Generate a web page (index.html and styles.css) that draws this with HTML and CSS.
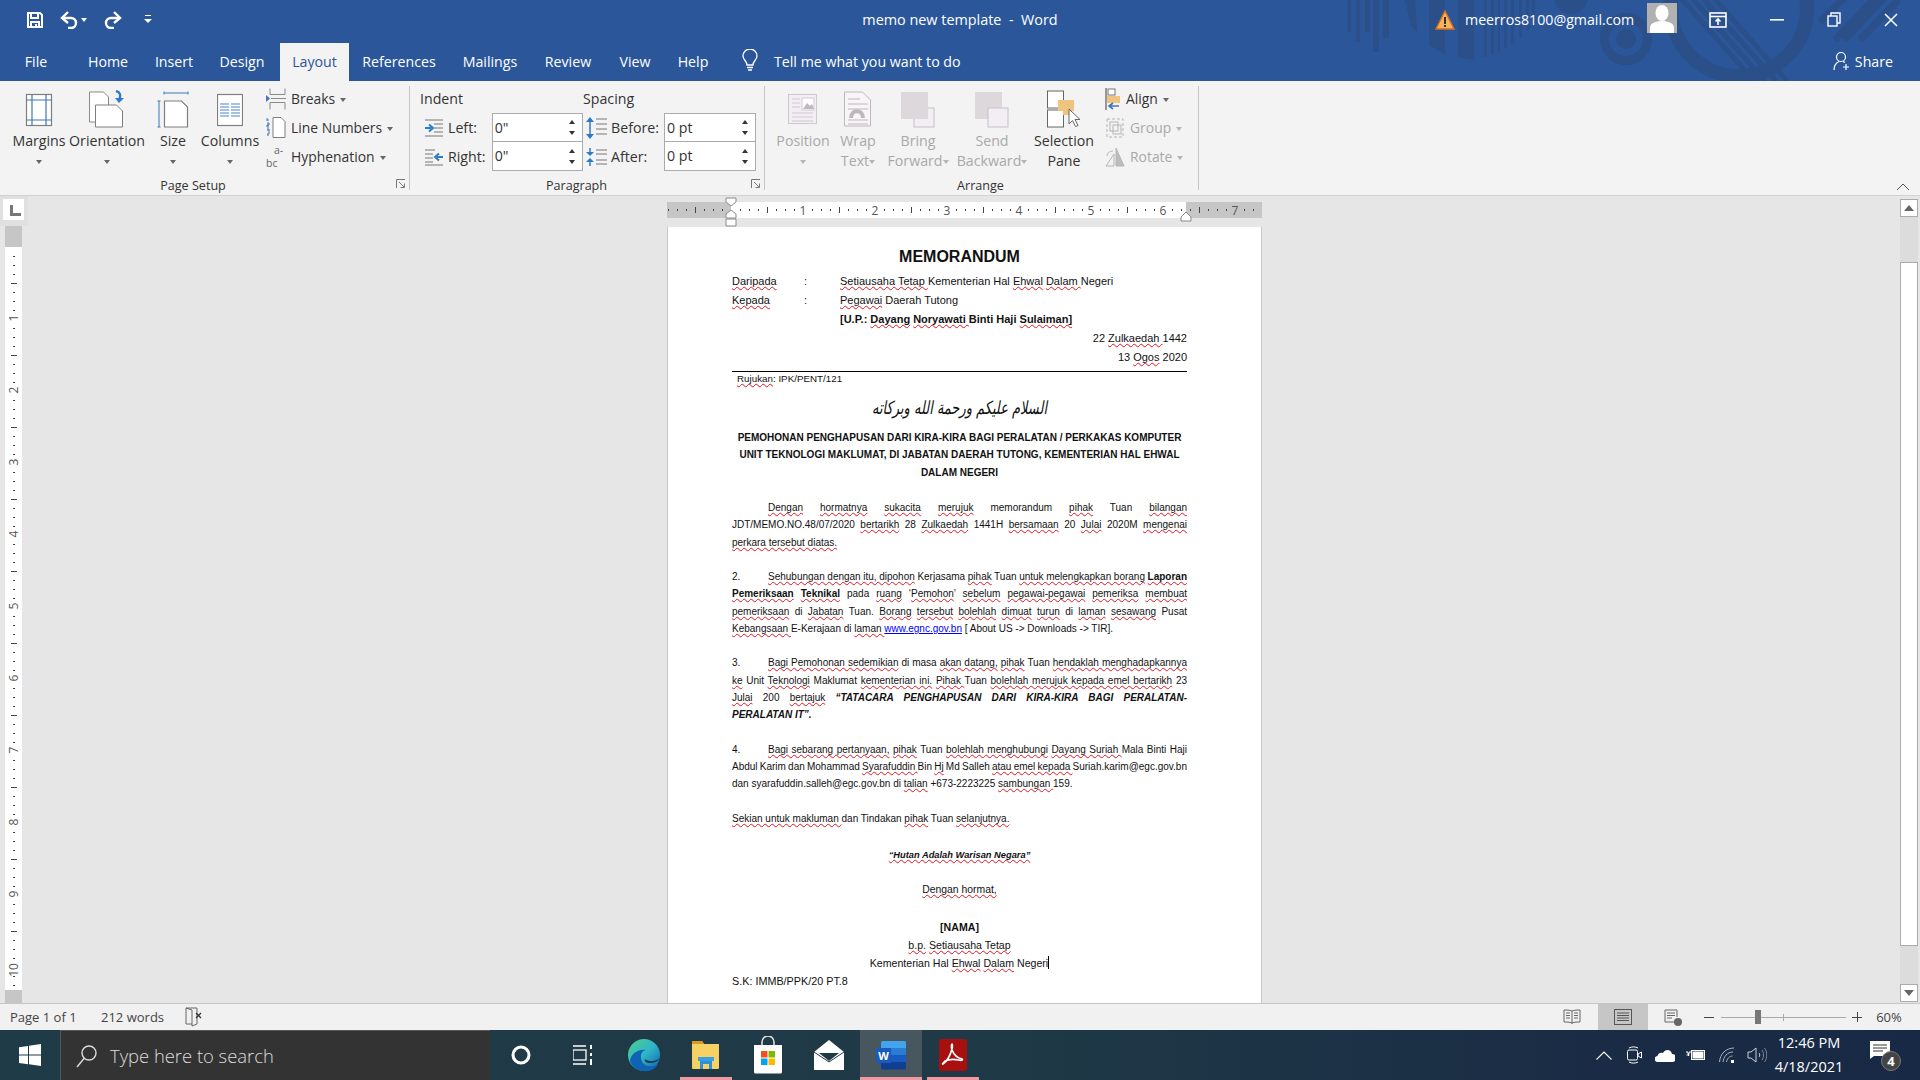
FILE: index.html
```html
<!DOCTYPE html>
<html lang="en">
<head>
<meta charset="utf-8">
<title>memo new template - Word</title>
<link rel="stylesheet" href="styles.css">
</head>
<body>
<div class="app">
<header class="head">
  <svg class="head-art" width="560" height="81" viewBox="0 0 560 81" fill="#2a4f89">
    <rect x="7" width="4" height="32"/><rect x="16" width="4" height="42"/><rect x="25" width="5" height="32"/><rect x="33" width="6" height="52"/><rect x="43" width="6" height="38"/>
    <path d="M65 0h10l2 32-6-6z"/><path d="M89 0h16v54l-16-9z"/><path d="M118 0h16v60l-16-3z"/>
    <rect x="144" width="3" height="57"/><rect x="151" width="3" height="54"/><rect x="158" width="2" height="52"/><rect x="164" width="3" height="48"/><rect x="171" width="3" height="44"/><rect x="179" width="3" height="38"/><rect x="186" width="3" height="30"/><rect x="192" width="3" height="24"/>
    <circle cx="231" cy="-3" r="17"/>
    <circle cx="286" cy="39" r="21.5" fill="none" stroke="#2a4f89" stroke-width="9"/><circle cx="286" cy="39" r="10"/>
    <circle cx="399" cy="8" r="68" fill="none" stroke="#2a4f89" stroke-width="14"/>
    <path d="M340 -3l74 84M351 -3l74 84M362 -3l74 84M373 -3l74 84" stroke="#2a4f89" stroke-width="5" fill="none"/>
    <path d="M495 40l40-42M504 40l40-42M480 22l24-24M520 40l40-42" stroke="#2a4f89" stroke-width="7" fill="none"/>
  </svg>
  <div class="titlebar">
    <div class="qat">
      <svg class="qat-save" width="18" height="18" viewBox="0 0 18 18" fill="none" stroke="#fff" stroke-width="2"><path d="M2 2h12l2 2v12H2z"/><path d="M5 2v5h7V2M5 16v-5h8v5"/><rect x="9" y="13" width="2" height="3" fill="#fff" stroke="none"/></svg>
      <svg class="qat-undo" width="20" height="18" viewBox="0 0 20 18" fill="none" stroke="#fff" stroke-width="2.4"><path d="M4 7h8a5 5 0 0 1 0 10H9"/><path d="M9 1L3 7l6 5"/></svg>
      <i class="qat-caret"></i>
      <svg class="qat-redo" width="20" height="18" viewBox="0 0 20 18" fill="none" stroke="#fff" stroke-width="2.4"><path d="M16 7H8a5 5 0 0 0 0 10h3"/><path d="M11 1l6 6-6 5"/></svg>
      <svg class="qat-more" width="8" height="9" viewBox="0 0 8 9" fill="#fff"><rect x="1" y="0" width="6" height="1"/><path d="M0 4h8L4 8z"/></svg>
    </div>
    <div class="doc-title">memo new template&nbsp; -&nbsp; Word</div>
    <div class="win">
      <svg class="warn" width="20" height="20" viewBox="0 0 20 20"><path d="M10 1L19 19H1z" fill="#f7b35e" stroke="#d9701d" stroke-width="1.4"/><rect x="9" y="7" width="2" height="7" fill="#333"/><rect x="9" y="15" width="2" height="2" fill="#333"/></svg>
      <span class="acct">meerros8100@gmail.com</span>
      <svg class="avatar" width="30" height="30" viewBox="0 0 30 30"><rect width="30" height="30" fill="#b1b1b1"/><ellipse cx="15" cy="10" rx="6.5" ry="8" fill="#fff"/><path d="M3 30v-5c0-5 6-7 12-7s12 2 12 7v5z" fill="#fff"/></svg>
      <svg class="w-opt" width="18" height="16" viewBox="0 0 18 16" fill="none" stroke="#fff" stroke-width="1.6"><rect x="1" y="1" width="16" height="14"/><path d="M1 4.5h16"/><path d="M9 13V7M6.5 9.5L9 7l2.5 2.5"/></svg>
      <svg class="w-min" width="14" height="2" viewBox="0 0 14 2"><rect width="14" height="1.6" fill="#fff"/></svg>
      <svg class="w-res" width="14" height="15" viewBox="0 0 14 15" fill="none" stroke="#fff" stroke-width="1.4"><rect x="1" y="4" width="9" height="10"/><path d="M4 4V1h9v10h-3"/></svg>
      <svg class="w-close" width="14" height="14" viewBox="0 0 14 14" stroke="#fff" stroke-width="1.5"><path d="M1 1l12 12M13 1L1 13"/></svg>
    </div>
  </div>
  <nav class="tabs">
    <span class="tab t-file">File</span>
    <span class="tab t-home">Home</span>
    <span class="tab t-insert">Insert</span>
    <span class="tab t-design">Design</span>
    <span class="tab t-layout">Layout</span>
    <span class="tab t-refs">References</span>
    <span class="tab t-mail">Mailings</span>
    <span class="tab t-review">Review</span>
    <span class="tab t-view">View</span>
    <span class="tab t-help">Help</span>
    <svg class="bulb" width="16" height="23" viewBox="0 0 16 23" fill="none" stroke="#fff" stroke-width="1.3"><path d="M5 16c0-4-4-5-4-9a7 7 0 0 1 14 0c0 4-4 5-4 9z"/><path d="M5 18.500h6M6 21h4"/></svg>
    <span class="tell">Tell me what you want to do</span>
    <span class="share"><svg width="18" height="20" viewBox="0 0 18 20" fill="none" stroke="#fff" stroke-width="1.2"><circle cx="8" cy="6" r="4.500"/><path d="M1 19c0-5 2-7 5-8.500M10 10.500l2 1M13 13v6M10 16h6"/></svg>Share</span>
  </nav>
</header>

<section class="ribbon">
  <div class="group g-page">
    <div class="g-body">
      <div class="large w-margins">
        <svg class="ico" width="28" height="36" viewBox="0 0 28 36" fill="none"><rect x="1.500" y="3.500" width="25" height="31" fill="#fff" stroke="#7f7f7f" stroke-width="1.2"/><path d="M7 3.500v31M21 3.500v31M1.500 9h25M1.500 29h25" stroke="#3f78b8" stroke-width="1.2"/></svg>
        <div class="lbl">Margins</div><div class="lbl"><i class="caret"></i></div>
      </div>
      <div class="large w-orient">
        <svg class="ico" width="38" height="38" viewBox="0 0 38 38" fill="none"><path d="M1.500 2h14l5 5v25H1.500z" fill="#fff" stroke="#8a8a8a"/><path d="M7.500 15h21l6 6v16h-27z" fill="#fff" stroke="#7f7f7f"/><path d="M28 1c4 1 5 4 3.500 8" stroke="#2f7cc6" stroke-width="2.400"/><path d="M27 8h9l-5 5z" fill="#2f7cc6"/></svg>
        <div class="lbl">Orientation</div><div class="lbl"><i class="caret"></i></div>
      </div>
      <div class="large w-size">
        <svg class="ico" width="32" height="36" viewBox="0 0 32 36" fill="none"><path d="M7 2h24M7 .5v3M31 .5v3M2 10v26M.5 10h3M.5 36h3" stroke="#3f78b8"/><path d="M7.500 10h17l6 6v20h-23z" fill="#fff" stroke="#7f7f7f" stroke-width="1.200"/></svg>
        <div class="lbl">Size</div><div class="lbl"><i class="caret"></i></div>
      </div>
      <div class="large w-cols">
        <svg class="ico" width="26" height="36" viewBox="0 0 26 36" fill="none"><rect x=".5" y="3.500" width="25" height="31" fill="#fff" stroke="#7f7f7f" stroke-width="1.200"/><path d="M3 13h9M14 13h9M3 16h9M14 16h9M3 19h9M14 19h9M3 22h9M14 22h9M3 25h9M14 25h9" stroke="#4a85c4"/></svg>
        <div class="lbl">Columns</div><div class="lbl"><i class="caret"></i></div>
      </div>
      <div class="smalls s-page">
        <div class="small"><svg width="20" height="22" viewBox="0 0 20 22" fill="none" stroke="#8a8a8a"><path d="M4 .5v6h15v-6M4 21.500v-7h15v7M5 10.500h15"/><path d="M0 7l4 3.500L0 14z" fill="#3f78b8" stroke="none"/></svg><span>Breaks<i class="caret"></i></span></div>
        <div class="small"><svg width="20" height="22" viewBox="0 0 20 22" fill="none"><path d="M7 .5h8l4 4v16H7z" fill="#fff" stroke="#7f7f7f"/><path d="M1 3h2M1 8h2M1 13h2M1 18h2M1 1v3M1 6h2v2H1v2h2M1 12h2v5H1" stroke="#3f78b8"/></svg><span>Line Numbers<i class="caret"></i></span></div>
        <div class="small"><span class="hy"><span class="hy-a">a-</span><span class="hy-b">bc</span></span><span>Hyphenation<i class="caret"></i></span></div>
      </div>
    </div>
    <div class="g-label lp-page">Page Setup</div>
    <svg class="launch" width="10" height="10" viewBox="0 0 10 10" fill="none" stroke="#777"><path d="M.5 9V.5H9M3 3l5 5M8.500 4.500v4h-4"/></svg>
  </div>

  <div class="group g-para">
    <div class="g-body para">
      <div class="pcol pcol-i">
        <div class="phead">Indent</div>
        <div class="prow"><svg class="pi" width="18" height="18" viewBox="0 0 18 18" fill="none" stroke="#777"><path d="M0 1h18M9 5h9M9 9h9M9 13h9M0 17h18"/><path d="M0 9h6M4 5.500l4 3.500-4 3.500" stroke="#2f7cc6" stroke-width="2"/></svg><label class="pl">Left:</label><div class="num">0"<span class="spin"><i class="up"></i><i class="dn"></i></span></div></div>
        <div class="prow"><svg class="pi" width="18" height="18" viewBox="0 0 18 18" fill="none" stroke="#777"><path d="M0 2h10M0 6h8M0 10h8M0 14h8M0 17h18"/><path d="M18 9h-6M14 5.500L10 9l4 3.500" stroke="#2f7cc6" stroke-width="2"/></svg><label class="pl">Right:</label><div class="num">0"<span class="spin"><i class="up"></i><i class="dn"></i></span></div></div>
      </div>
      <div class="pcol pcol-s">
        <div class="phead">Spacing</div>
        <div class="prow"><svg class="ps" width="21" height="22" viewBox="0 0 21 22" fill="none" stroke="#777"><path d="M10 2h11M10 7h11M10 12h11M10 17h11"/><path d="M4 1v20" stroke="#2f7cc6" stroke-width="1.500"/><path d="M4 0l4 5H0zM4 22l4-5H0z" fill="#2f7cc6" stroke="none"/></svg><label class="pl2">Before:</label><div class="num num-o">0 pt<span class="spin"><i class="up"></i><i class="dn"></i></span></div></div>
        <div class="prow"><svg class="ps" width="21" height="18" viewBox="0 0 21 18" fill="none" stroke="#777"><path d="M10 2h11M10 6h11M10 12h11M10 16h11"/><path d="M4 0v6M4 12v6" stroke="#2f7cc6" stroke-width="1.500"/><path d="M4 8l4-4H0zM4 10l4 4H0z" fill="#2f7cc6" stroke="none"/></svg><label class="pl2">After:</label><div class="num num-o">0 pt<span class="spin"><i class="up"></i><i class="dn"></i></span></div></div>
      </div>
    </div>
    <div class="g-label lp-para">Paragraph</div>
    <svg class="launch" width="10" height="10" viewBox="0 0 10 10" fill="none" stroke="#777"><path d="M.5 9V.5H9M3 3l5 5M8.500 4.500v4h-4"/></svg>
  </div>

  <div class="group g-arr">
    <div class="g-body">
      <div class="large off w-pos">
        <svg class="ico" width="30" height="36" viewBox="0 0 30 36" fill="none" stroke="#cfc9cf"><rect x=".5" y="3.500" width="28" height="29" fill="#f3eef4"/><path d="M4 22h21M4 26h21M4 30h21M4 8h8M4 12h8M4 16h8"/><rect x="14" y="7" width="12" height="12" fill="#fff"/><path d="M15 18l4-6 3 3 2-2 2 5z" fill="#bdb8bd" stroke="none"/></svg>
        <div class="lbl">Position</div><div class="lbl"><i class="caret"></i></div>
      </div>
      <div class="large off w-wrap">
        <svg class="ico" width="28" height="38" viewBox="0 0 28 38" fill="none" stroke="#bdb8bd"><path d="M.5 2h18l8 8v26H.5z" fill="#f7f5f7"/><path d="M4 9h12M4 14h20M4 19h20M4 30h20M4 34h20"/><path d="M7 28c0-9 12-9 12 0" stroke-width="4"/></svg>
        <div class="lbl">Wrap</div><div class="lbl">Text<i class="caret"></i></div>
      </div>
      <div class="large off w-bring">
        <svg class="ico" width="34" height="38" viewBox="0 0 34 38" fill="none"><rect x="13" y="18" width="20" height="19" fill="#f3eef4" stroke="#c4c0c4"/><rect x="0" y="2" width="27" height="27" fill="#dcd8dc"/></svg>
        <div class="lbl">Bring</div><div class="lbl">Forward<i class="caret"></i></div>
      </div>
      <div class="large off w-send">
        <svg class="ico" width="34" height="38" viewBox="0 0 34 38" fill="none"><rect x="0" y="2" width="27" height="27" fill="#dcd8dc"/><rect x="13" y="18" width="20" height="19" fill="#f3eef4" stroke="#c4c0c4"/></svg>
        <div class="lbl">Send</div><div class="lbl">Backward<i class="caret"></i></div>
      </div>
      <div class="large w-sel">
        <svg class="ico" width="34" height="38" viewBox="0 0 34 38" fill="none"><rect x=".5" y="1" width="16" height="17" fill="#fff" stroke="#666"/><rect x=".5" y="20" width="16" height="17" fill="#fff" stroke="#666"/><path d="M11 10h16v11h-4v4h-7v-4h-5z" fill="#efc47f"/><path d="M22 19v15l3.500-3.500 3 6 2.500-1-3-6h5z" fill="#fff" stroke="#666"/></svg>
        <div class="lbl">Selection</div><div class="lbl">Pane</div>
      </div>
      <div class="smalls s-arr">
        <div class="small"><svg width="16" height="22" viewBox="0 0 16 22" fill="none"><path d="M1 0v22" stroke="#666" stroke-width="1.300"/><rect x="3" y="1" width="7" height="6" fill="#fff" stroke="#777"/><rect x="2" y="8" width="13" height="7" fill="#efc47f"/><path d="M14 18H5M8 15l-4 3 4 3" stroke="#3f78b8" stroke-width="1.600"/></svg><span>Align<i class="caret"></i></span></div>
        <div class="small off"><svg width="20" height="22" viewBox="0 0 20 22" fill="none" stroke="#b5b5b5"><rect x="2" y="2" width="16" height="18" stroke-dasharray="3 2"/><rect x="5" y="5" width="8" height="9"/><rect x="8" y="8" width="8" height="9"/></svg><span>Group<i class="caret"></i></span></div>
        <div class="small off"><svg width="20" height="20" viewBox="0 0 20 20" fill="none" stroke="#b5b5b5"><path d="M1 19l8-12v12z"/><path d="M11 1v18h8z" fill="#bdbdbd"/><path d="M2 9c0-3 3-5 6-5"/></svg><span>Rotate<i class="caret"></i></span></div>
      </div>
    </div>
    <div class="g-label lp-arr">Arrange</div>
  </div>
  <svg class="collapse" width="14" height="8" viewBox="0 0 14 8" fill="none" stroke="#555"><path d="M1 7l6-6 6 6"/></svg>
</section>

<main class="work">
  <aside class="left">
    <div class="tabstop"><i></i></div>
    <svg class="vruler" width="17" height="777" viewBox="0 0 17 777">
      <defs><pattern id="vt" width="17" height="72" patternUnits="userSpaceOnUse" y="21"><rect x="8" y="9" width="2" height="1" fill="#444"/><rect x="8" y="18" width="2" height="1" fill="#444"/><rect x="8" y="27" width="2" height="1" fill="#444"/><rect x="6" y="36" width="6" height="1" fill="#444"/><rect x="8" y="45" width="2" height="1" fill="#444"/><rect x="8" y="54" width="2" height="1" fill="#444"/><rect x="8" y="63" width="2" height="1" fill="#444"/></pattern></defs>
      <rect width="17" height="777" fill="#fff"/><rect width="17" height="777" fill="url(#vt)"/>
      <rect width="17" height="21" fill="#c6c6c6"/><rect y="764" width="17" height="13" fill="#c6c6c6"/>
      <g class="rn"><text transform="translate(13,92) rotate(-90)">1</text><text transform="translate(13,164) rotate(-90)">2</text><text transform="translate(13,236) rotate(-90)">3</text><text transform="translate(13,308) rotate(-90)">4</text><text transform="translate(13,380) rotate(-90)">5</text><text transform="translate(13,452) rotate(-90)">6</text><text transform="translate(13,524) rotate(-90)">7</text><text transform="translate(13,596) rotate(-90)">8</text><text transform="translate(13,668) rotate(-90)">9</text><text transform="translate(13,744) rotate(-90)">10</text></g>
    </svg>
  </aside>
  <div class="stage">
    <svg class="hruler" width="595" height="25" viewBox="0 0 595 25">
      <defs><pattern id="ht" width="72" height="16" patternUnits="userSpaceOnUse" x="64"><rect x="9" y="7" width="1" height="2" fill="#444"/><rect x="18" y="7" width="1" height="2" fill="#444"/><rect x="27" y="7" width="1" height="2" fill="#444"/><rect x="36" y="5" width="1" height="6" fill="#444"/><rect x="45" y="7" width="1" height="2" fill="#444"/><rect x="54" y="7" width="1" height="2" fill="#444"/><rect x="63" y="7" width="1" height="2" fill="#444"/></pattern></defs>
      <rect width="595" height="16" fill="#c6c6c6"/><rect x="64" width="455" height="16" fill="#fff"/><rect width="595" height="16" fill="url(#ht)"/>
      <g class="rn"><rect x="130" y="2" width="12" height="12" fill="#fff"/><rect x="202" y="2" width="12" height="12" fill="#fff"/><rect x="274" y="2" width="12" height="12" fill="#fff"/><rect x="346" y="2" width="12" height="12" fill="#fff"/><rect x="418" y="2" width="12" height="12" fill="#fff"/><rect x="490" y="2" width="12" height="12" fill="#fff"/><rect x="562" y="2" width="12" height="12" fill="#c6c6c6"/><text x="136" y="12.500">1</text><text x="208" y="12.500">2</text><text x="280" y="12.500">3</text><text x="352" y="12.500">4</text><text x="424" y="12.500">5</text><text x="496" y="12.500">6</text><text x="568" y="12.500">7</text></g>
      <path d="M59-4h10v4l-5 4-5-4zM59 16v-4l5-4 5 4v4zM59 17h10v7H59z" fill="#fff" stroke="#8a8a8a"/>
      <path d="M514 19v-4l5-5 5 5v4z" fill="#fff" stroke="#8a8a8a"/>
    </svg>
    <article class="page">
      <div class="memo-h">MEMORANDUM</div>
      <div class="hd first"><span class="hk"><u>Daripada</u></span><span class="hc">:</span><span><u>Setiausaha Tetap </u>Kementerian Hal <u>Ehwal</u> <u>Dalam </u>Negeri</span></div>
      <div class="hd"><span class="hk"><u>Kepada</u></span><span class="hc">:</span><span><u>Pegawai</u> Daerah Tutong</span></div>
      <div class="hd"><span class="hk"></span><span class="hc"></span><b>[U.P.: <u>Dayang</u> <u>Noryawati </u>Binti Haji <u>Sulaiman]</u></b></div>
      <div class="hd right">22 <u>Zulkaedah </u>1442</div>
      <div class="hd right">13 <u>Ogos</u> 2020</div>
      <div class="rule"></div>
      <div class="ruj"><u>Rujukan</u>: IPK/PENT/121</div>
      <div class="salam" lang="ar" dir="rtl">السلام عليكم ورحمة الله وبركاته</div>
      <div class="subj first">PEMOHONAN PENGHAPUSAN DARI KIRA-KIRA BAGI PERALATAN / PERKAKAS KOMPUTER</div>
      <div class="subj">UNIT TEKNOLOGI MAKLUMAT, DI JABATAN DAERAH TUTONG, KEMENTERIAN HAL EHWAL</div>
      <div class="subj">DALAM NEGERI</div>

      <div class="bd j bd-start"><span class="tb"></span><u>Dengan</u> <u>hormatnya</u> <u>sukacita</u> <u>merujuk</u> memorandum <u>pihak</u> Tuan <u>bilangan</u></div>
      <div class="bd j">JDT/MEMO.NO.48/07/2020 <u>bertarikh</u> 28 <u>Zulkaedah</u> 1441H <u>bersamaan</u> 20 <u>Julai</u> 2020M <u>mengenai</u></div>
      <div class="bd"><u>perkara tersebut diatas.</u></div>
      <div class="blank"></div>
      <div class="bd j tight"><span class="tb">2.</span><u>Sehubungan dengan itu, dipohon</u> Kerjasama <u>pihak</u> Tuan <u>untuk melengkapkan borang</u> <u><b>Laporan</b></u></div>
      <div class="bd j"><b><u>Pemeriksaan</u> <u>Teknikal</u></b> pada <u>ruang</u> ‘<u>Pemohon</u>’ <u>sebelum</u> <u>pegawai-pegawai</u> <u>pemeriksa</u> <u>membuat</u></div>
      <div class="bd j"><u>pemeriksaan</u> di <u>Jabatan</u> Tuan. <u>Borang</u> <u>tersebut</u> <u>bolehlah</u> <u>dimuat</u> <u>turun</u> di <u>laman</u> <u>sesawang</u> Pusat</div>
      <div class="bd"><u>Kebangsaan </u>E-Kerajaan di <u>laman </u><a class="lnk">www.egnc.gov.bn</a> [ About US -&gt; Downloads -&gt; TIR].</div>
      <div class="blank"></div>
      <div class="bd j"><span class="tb">3.</span><u>Bagi Pemohonan sedemikian</u> di masa <u>akan datang,</u> <u>pihak</u> Tuan <u>hendaklah menghadapkannya</u></div>
      <div class="bd j"><u>ke</u> Unit <u>Teknologi</u> Maklumat <u>kementerian ini.</u> <u>Pihak </u>Tuan <u>bolehlah merujuk kepada emel bertarikh</u> 23</div>
      <div class="bd j"><u>Julai</u> 200 <u>bertajuk</u> <b><em>“TATACARA PENGHAPUSAN DARI KIRA-KIRA BAGI PERALATAN-</em></b></div>
      <div class="bd"><b><em>PERALATAN IT”.</em></b></div>
      <div class="blank"></div>
      <div class="bd j"><span class="tb">4.</span><u>Bagi sebarang pertanyaan,</u> <u>pihak</u> Tuan <u>bolehlah menghubungi</u> <u>Dayang Suriah </u>Mala Binti Haji</div>
      <div class="bd j tight">Abdul Karim dan Mohammad <u>Syarafuddin </u>Bin <u>Hj</u> Md Salleh <u>atau emel kepada </u>Suriah.karim@egc.gov.bn</div>
      <div class="bd">dan syarafuddin.salleh@egc.gov.bn di <u>talian</u> +673-2223225 <u>sambungan </u>159.</div>
      <div class="blank"></div>
      <div class="bd"><u>Sekian untuk makluman </u>dan Tindakan <u>pihak</u> Tuan <u>selanjutnya.</u></div>
      <div class="motto"><b><em><u>“Hutan Adalah Warisan Negara”</u></em></b></div>
      <div class="sign regards"><u>Dengan hormat,</u></div>
      <div class="sign name"><b>[NAMA]</b></div>
      <div class="sign"><u>b.p.</u> <u>Setiausaha Tetap</u></div>
      <div class="sign">Kementerian Hal <u>Ehwal</u> <u>Dalam</u> Negeri<i class="cursor"></i></div>
      <div class="sk">S.K: IMMB/PPK/20 PT.8</div>
    </article>
  </div>
  <aside class="vscroll">
    <div class="sb-btn"><i class="sb-up"></i></div>
    <div class="sb-track"><div class="sb-thumb"></div></div>
    <div class="sb-btn"><i class="sb-dn"></i></div>
  </aside>
</main>

<footer class="status">
  <span class="st-a">Page 1 of 1</span>
  <span class="st-b">212 words</span>
  <svg class="st-c" width="18" height="20" viewBox="0 0 18 20" fill="none" stroke="#666"><path d="M1 1h11v16l-5 2V3L1 1zM1 1v16h6"/><path d="M11 6l5 5M16 6l-5 5" stroke="#333" stroke-width="1.300"/></svg>
  <div class="st-right">
    <svg class="v-read" width="18" height="16" viewBox="0 0 18 16" fill="none" stroke="#666"><path d="M9 2C7 1 3 1 1 1v12c2 0 6 0 8 1 2-1 6-1 8-1V1c-2 0-6 0-8 1zM9 2v13M3 4h4M3 6.500h4M3 9h4M11 4h4M11 6.500h4M11 9h4"/></svg>
    <span class="v-print"><svg width="18" height="16" viewBox="0 0 18 16" fill="none" stroke="#555"><rect x=".5" y=".5" width="17" height="15"/><path d="M3 4h12M3 6.500h12M3 9h12M3 11.500h12"/></svg></span>
    <svg class="v-web" width="18" height="17" viewBox="0 0 18 17" fill="none" stroke="#666"><path d="M11 13H1V1h12v7M3 4h8M3 6.500h8M3 9h5"/><circle cx="14" cy="13" r="4" fill="#666" stroke="none"/></svg>
    <span class="z-minus"></span>
    <div class="slider"><i class="s-tick"></i><i class="s-thumb"></i></div>
    <span class="z-plus"></span>
    <span class="z-pct">60%</span>
  </div>
</footer>

<div class="taskbar">
  <div class="start"><svg width="22" height="22" viewBox="0 0 22 22" fill="#fff"><path d="M0 3.200l9-1.300v8.600H0zM10 1.800L22 0v10.500H10zM0 11.500h9v8.700L0 18.900zM10 11.500h12V22l-12-1.800z"/></svg></div>
  <div class="search"><svg width="22" height="24" viewBox="0 0 22 24" fill="none" stroke="#ddd" stroke-width="1.400"><circle cx="13" cy="9" r="7"/><path d="M8 14.500L1 23"/></svg><span>Type here to search</span></div>
  <div class="cell"><svg width="20" height="20" viewBox="0 0 20 20" fill="none" stroke="#fff" stroke-width="3"><circle cx="10" cy="10" r="8"/></svg></div>
  <div class="cell"><svg width="20" height="20" viewBox="0 0 20 20" fill="none" stroke="#fff" stroke-width="1.300"><path d="M0 1h13M0 19h13"/><rect x="0" y="5" width="13" height="10"/><path d="M18 0v4M18 8v3M18 14v6" stroke-width="2"/></svg></div>
  <div class="cell"><svg width="32" height="34" viewBox="0 0 32 34"><defs><linearGradient id="eg" x1="0" y1="0" x2="1" y2="1"><stop offset="0" stop-color="#4ed08a"/><stop offset=".5" stop-color="#2fb6c9"/><stop offset="1" stop-color="#0d5fb0"/></linearGradient></defs><circle cx="16" cy="17" r="16" fill="url(#eg)"/><path d="M2 23C6 36 26 36 30 26c-6 4-16 3-17-6-1-5 3-8 5-8-7-1-15 3-16 11z" fill="#0f63b3"/><path d="M17 21c3 3 10 3 15-1-1 3-6 5-10 5s-6-2-5-4z" fill="#1f3a45"/></svg></div>
  <div class="cell open"><svg width="28" height="30" viewBox="0 0 28 30"><path d="M0 2a1 1 0 0 1 1-1h9l2 3h15v24a1 1 0 0 1-1 1H1a1 1 0 0 1-1-1z" fill="#f6d264"/><path d="M0 2a1 1 0 0 1 1-1h9l2 3H0z" fill="#d99a1f"/><path d="M8 29V20h12v9h-3v-5h-6v5z" fill="#2f8fd8"/><rect x="6" y="17" width="16" height="4" fill="#3aa0e6"/></svg></div>
  <div class="cell"><svg width="30" height="38" viewBox="0 0 30 38"><path d="M9 10V6a6 6 0 0 1 12 0v4" fill="none" stroke="#ddd" stroke-width="1.600"/><path d="M1 9h28v27a1.500 1.500 0 0 1-1.500 1.500h-25A1.500 1.500 0 0 1 1 36z" fill="#fff"/><rect x="8" y="15" width="6.500" height="6.500" fill="#f25022"/><rect x="15.500" y="15" width="6.500" height="6.500" fill="#7fba00"/><rect x="8" y="22.500" width="6.500" height="6.500" fill="#00a4ef"/><rect x="15.500" y="22.500" width="6.500" height="6.500" fill="#ffb900"/></svg></div>
  <div class="cell"><svg width="30" height="30" viewBox="0 0 30 30"><path d="M15 0L30 12v18H0V12z" fill="#fff"/><path d="M5 13h20L15 21z" fill="#1f3a45"/><path d="M0 12l15 10 15-10" fill="none" stroke="#1f3a45" stroke-width="1"/></svg></div>
  <div class="cell active open"><svg width="30" height="30" viewBox="0 0 30 30"><rect x="5" y="1" width="25" height="28" rx="1.500" fill="#41a5ee"/><rect x="5" y="8" width="25" height="7" fill="#2b7cd3"/><rect x="5" y="15" width="25" height="7" fill="#185abd"/><path d="M5 22h25v6a1.500 1.500 0 0 1-1.500 1.500H6.500A1.500 1.500 0 0 1 5 28z" fill="#103f91"/><rect x="0" y="8" width="15" height="15" rx="1" fill="#185abd"/><text x="7.500" y="19.500" class="wd">W</text></svg></div>
  <div class="cell open"><svg width="28" height="32" viewBox="0 0 28 32"><rect width="28" height="32" rx="3" fill="#a80f0f"/><path d="M5 24c3-2 6-7 8-14 .5-3 .5-5 0-5s-1 3 0 6c2 5 5 8 10 9 1 .5 0 2-3 1-5-1-10-1-14 1-3 3-3 4-1 2z" fill="none" stroke="#fff" stroke-width="1.700"/></svg></div>
  <div class="tray">
    <svg class="t1" width="16" height="9" viewBox="0 0 16 9" fill="none" stroke="#fff" stroke-width="1.100"><path d="M.5 8.500L8 1l7.500 7.500"/></svg>
    <svg class="t2" width="15" height="18" viewBox="0 0 15 18" fill="none" stroke="#fff"><path d="M2 2C5 .5 8 .5 11 2M2 16c3 1.500 6 1.500 9 0"/><rect x=".5" y="4" width="10" height="10" rx="1.500"/><path d="M11 8l3.500-2v6L11 10z"/></svg>
    <svg class="t3" width="20" height="13" viewBox="0 0 20 13" fill="#fff"><path d="M3 13a3 3 0 0 1-.5-6C3 4 6 3 8 4c2-4 8-4 9 1a4 4 0 0 1 0 8z"/></svg>
    <svg class="t4" width="20" height="12" viewBox="0 0 20 12" fill="none" stroke="#fff"><rect x="5.500" y="1.500" width="13" height="9"/><rect x="7" y="3" width="10" height="6" fill="#fff"/><path d="M.5 6h3M1 2v2h3V2M2.500 4v3"/></svg>
    <svg class="t5" width="16" height="16" viewBox="0 0 16 16" fill="none" stroke="#aab2bd"><path d="M.5 15C1 7 7 1 15 1M4 15c.5-5 4-10 10-10M7.500 15c.3-3 3-6 6-6"/><rect x="12" y="13" width="3" height="3" fill="#fff" stroke="none"/></svg>
    <svg class="t6" width="20" height="18" viewBox="0 0 20 18" fill="none" stroke="#ccd"><path d="M1 6h3l5-4v14l-5-4H1zM12 7c1 1 1 3 0 4"/><path d="M15 4c2 3 2 7 0 10M17.500 2c3 4 3 10 0 14" stroke="#7f8a99"/></svg>
    <div class="clock"><span>12:46 PM</span><span>4/18/2021</span></div>
    <span class="notif"><svg width="20" height="18" viewBox="0 0 20 18"><path d="M0 0h20v15H4l-4 3z" fill="#fff"/><path d="M3 4h14M3 7h14M3 10h10" stroke="#333"/></svg><b class="badge">4</b></span>
  </div>
</div>
</div>
</body>
</html>
```
FILE: styles.css
```css
* { box-sizing: border-box; }
html, body { margin: 0; height: 100%; overflow: hidden; }
body { font-family: "Open Sans", "Noto Sans", sans-serif; color: #333; }
.app { width: 1920px; height: 1080px; display: flex; flex-direction: column; }

/* header */
.head { position: relative; height: 81px; background: #2b579a; color: #fff; flex: none; overflow: hidden; }
.head-art { position: absolute; right: 20px; top: 0; }
.titlebar { position: relative; height: 39px; display: grid; grid-template-columns: 1fr auto 1fr; align-items: center; }
.qat { display: flex; align-items: center; }
.qat-save { margin-left: 26px; }
.qat-undo { margin-left: 15px; }
.qat-caret { width: 0; height: 0; border: 3.5px solid transparent; border-top: 4px solid #fff; border-bottom: 0; margin-left: 2px; }
.qat-redo { margin-left: 16px; }
.qat-more { margin-left: 21px; }
.doc-title { font-size: 14.4px; }
.win { display: flex; align-items: center; justify-content: flex-end; height: 39px; }
.warn { margin-right: 10px; }
.acct { font-size: 14.200px; width: 176px; }
.avatar { margin-left: 6px; margin-top: -3px; margin-right: 32px; }
.w-opt { margin-right: 43px; }
.w-min { margin-right: 43px; }
.w-res { margin-right: 43px; }
.w-close { margin-right: 22px; }

.tabs { position: relative; height: 42px; display: flex; align-items: flex-end; font-size: 14.2px; }
.tab { height: 38px; display: flex; align-items: center; justify-content: center; padding-bottom: 2px; }
.t-file { width: 72px; }
.t-home { width: 72px; }
.t-insert { width: 60px; }
.t-design { width: 76px; }
.t-layout { width: 69px; background: #f3f3f3; color: #2b579a; }
.t-refs { width: 100px; }
.t-mail { width: 82px; }
.t-review { width: 74px; }
.t-view { width: 60px; }
.t-help { width: 56px; }
.bulb { margin: 0 16px 9px 21px; }
.tell { height: 38px; display: flex; align-items: center; padding-bottom: 2px; }
.share { height: 38px; display: flex; align-items: center; margin-left: auto; margin-right: 27px; gap: 4px; padding-bottom: 2px; }

/* ribbon */
.ribbon { position: relative; height: 115px; background: #f3f3f3; border-bottom: 1px solid #d2d2d2; display: flex; flex: none; font-size: 14.2px; color: #333; }
.group { position: relative; display: flex; flex-direction: column; height: 114px; }
.group::after { content: ""; position: absolute; right: 0; top: 5px; bottom: 5px; width: 1px; background: #c6c6c6; }
.g-page { width: 410px; padding-left: 8px; }
.g-para { width: 355px; padding-left: 10px; }
.g-arr { width: 434px; padding-left: 7px; }
.g-body { height: 96px; display: flex; }
.g-label { height: 18px; line-height: 18px; text-align: center; font-size: 12.600px; }
.lp-page { padding-right: 32px; }
.lp-para { padding-right: 32px; }
.lp-arr { padding-right: 10px; }
.launch { position: absolute; right: 4px; bottom: 6px; }
.large { display: flex; flex-direction: column; align-items: center; padding-top: 9px; flex: none; }
.ico { height: 38px; flex: none; }
.lbl { line-height: 19.500px; height: 19.500px; white-space: nowrap; margin-top: 0; }
.ico + .lbl { margin-top: 3px; }
.w-margins { width: 62px; }
.w-orient { width: 74px; }
.w-size { width: 58px; }
.w-cols { width: 56px; }
.w-pos { width: 62px; }
.w-wrap { width: 48px; }
.w-bring { width: 72px; }
.w-send { width: 76px; }
.w-sel { width: 68px; }
.off { color: #a9a9a9; }
.caret { display: inline-block; width: 0; height: 0; border: 3.500px solid transparent; border-top: 4px solid #666; border-bottom: 0; margin-left: 5px; vertical-align: 2px; }
.lbl > .caret:first-child { margin-left: 0; }
.off .caret { border-top-color: #b5b5b5; }
.smalls { display: flex; flex-direction: column; padding-top: 3px; font-size: 13.900px; }
.s-page { margin-left: 8px; }
.s-arr { margin-left: 7px; }
.small { height: 29px; display: flex; align-items: center; gap: 5px; white-space: nowrap; }
.hy { width: 20px; height: 26px; display: flex; flex-direction: column; font-size: 10.500px; line-height: 13px; color: #666; }
.hy-a { padding-left: 8px; height: 13px; }
.hy-b { height: 13px; }

.para { gap: 0; }
.pcol { display: flex; flex-direction: column; padding-top: 4px; }
.pcol-i { width: 163px; }
.phead { height: 28px; line-height: 28px; }
.prow { height: 29px; display: flex; align-items: center; }
.pi { margin-left: 5px; margin-right: 5px; flex: none; }
.pl { width: 44px; }
.ps { margin-left: 3px; margin-right: 4px; flex: none; }
.pl2 { width: 53px; }
.num { position: relative; width: 92px; height: 30px; background: #fff; border: 1px solid #ababab; line-height: 28px; padding-left: 2px; }
.prow + .prow .num { margin-top: -1px; }
.spin { position: absolute; right: 7px; top: 0; bottom: 0; display: flex; flex-direction: column; justify-content: space-around; padding: 3px 0; }
.up { display: block; width: 0; height: 0; border: 3px solid transparent; border-bottom: 4px solid #333; border-top: 0; }
.dn { display: block; width: 0; height: 0; border: 3px solid transparent; border-top: 4px solid #333; border-bottom: 0; }
.collapse { position: absolute; right: 10px; bottom: 4px; }

/* workspace */
.work { flex: 1; min-height: 0; display: flex; background: #e6e6e6; overflow: hidden; }
.left { width: 29px; flex: none; display: flex; flex-direction: column; }
.tabstop { width: 28px; height: 30px; padding: 3px 4px 6px 3px; background: #e0e0e0; }
.tabstop i { display: block; height: 100%; background: #fff; position: relative; }
.tabstop i::before { content: ""; position: absolute; left: 7px; top: 6px; width: 8px; height: 8px; border-left: 3px solid #777; border-bottom: 3px solid #777; }
.vruler { margin-left: 5px; flex: none; }
.rn text { font-size: 12px; fill: #555; font-family: "Open Sans", sans-serif; text-anchor: middle; }
.stage { flex: 1; display: flex; flex-direction: column; align-items: center; padding-top: 6px; min-width: 0; }
.hruler { flex: none; overflow: visible; display: block; }
.page { width: 595px; flex: 1; background: #fff; border: 1px solid #c6c6c6; border-top: 0; border-bottom: 0; padding: 20px 74px 0 64px; font-family: "Liberation Sans", Arial, sans-serif; color: #111; overflow: hidden; }
.page u { text-decoration: underline wavy #e5141f 1px; text-underline-offset: 1px; text-decoration-skip-ink: none; }
.memo-h { height: 20px; line-height: 20px; text-align: center; font-weight: 700; font-size: 16px; }
.hd { height: 19px; line-height: 19px; font-size: 11px; display: flex; }
.hd.first { margin-top: 5px; }
.hd.right { display: block; text-align: right; }
.hk { width: 72px; flex: none; }
.hc { width: 36px; flex: none; }
.rule { height: 1px; background: #000; margin-top: 4px; }
.ruj { height: 14px; line-height: 14px; font-size: 9.800px; padding-left: 5px; }
.salam { height: 28px; margin-top: 8px; line-height: 28px; text-align: center; font-family: "DejaVu Sans", sans-serif; font-size: 13px; font-style: italic; transform: scaleY(1.4); }
.subj { height: 17.400px; line-height: 17.400px; text-align: center; font-weight: 700; font-size: 10px; white-space: nowrap; }
.subj.first { margin-top: 7px; }
.bd { height: 17.250px; line-height: 17.250px; font-size: 10px; }
.tight { word-spacing: -1.500px; }
.j { text-align: justify; text-align-last: justify; }
.bd-start { margin-top: 18px; }
.blank { height: 17.250px; }
.tb { display: inline-block; width: 36px; text-align: left; text-align-last: left; }
.lnk { color: #0000ff; text-decoration: underline; }
.motto { height: 18px; line-height: 18px; margin-top: 19px; font-size: 9.300px; text-align: center; }
.sign { height: 18px; line-height: 18px; font-size: 10.600px; text-align: center; }
.regards { margin-top: 17px; font-size: 10.400px; }
.name { margin-top: 19px; }
.sk { height: 18px; line-height: 18px; font-size: 10.800px; }
.cursor { display: inline-block; width: 1px; height: 13px; background: #000; vertical-align: -2px; }

.vscroll { width: 20px; flex: none; display: flex; flex-direction: column; padding: 3px 2px 1px 0; }
.sb-btn { height: 18px; flex: none; background: #fff; border: 1px solid #ababab; display: flex; align-items: center; justify-content: center; }
.sb-up { border: 5px solid transparent; border-bottom: 6px solid #666; border-top: 0; }
.sb-dn { border: 5px solid transparent; border-top: 6px solid #666; border-bottom: 0; }
.sb-track { flex: 1; background: #dcdcdc; padding: 45px 0 38px; display: flex; }
.sb-thumb { flex: 1; background: #fff; border: 1px solid #ababab; }

/* status */
.status { height: 27px; flex: none; background: #f1f1f1; border-top: 1px solid #c6c6c6; display: flex; align-items: center; font-size: 13px; color: #444; }
.st-a { margin-left: 10px; width: 91px; }
.st-b { width: 84px; }
.st-right { margin-left: auto; display: flex; align-items: center; height: 26px; position: relative; padding-right: 10px; }
.v-read { margin-right: 17px; }
.v-print { width: 50px; height: 26px; background: #c6c6c6; display: flex; align-items: center; justify-content: center; margin-right: 16px; }
.v-web { margin-right: 22px; }
.z-minus { width: 10px; height: 1px; background: #444; margin-right: 7px; }
.slider { position: relative; width: 125px; height: 1px; background: #aaa; }
.s-tick { position: absolute; left: 62px; top: -3px; width: 1px; height: 7px; background: #aaa; }
.s-thumb { position: absolute; left: 34px; top: -7px; width: 6px; height: 14px; background: #777; }
.z-plus { position: relative; width: 10px; height: 1px; background: #444; margin-left: 6px; }
.z-plus::after { content: ""; position: absolute; left: 4.500px; top: -4.500px; width: 1px; height: 10px; background: #444; }
.z-pct { width: 40px; margin-left: 8px; text-align: center; padding-right: 2px; }

/* taskbar */
.taskbar { height: 50px; flex: none; display: flex; align-items: center; background: linear-gradient(90deg, #1f3b47 0%, #1f3a46 50%, #1a2b45 85%, #182945 100%); color: #fff; }
.start { width: 60px; display: flex; justify-content: center; }
.search { width: 430px; height: 50px; background: #333; border: 1px solid #555; border-width: 1px 0 0 1px; display: flex; align-items: center; font-size: 18.400px; color: #ddd; padding-left: 15px; gap: 12px; flex: none; font-weight: 300; }
.cell { position: relative; width: 61.700px; height: 50px; display: flex; align-items: center; justify-content: center; flex: none; }
.cell.open::after { content: ""; position: absolute; left: 5px; right: 5px; bottom: 0; height: 3px; background: #f09a9f; }
.cell.active { background: #47565f; }
.cell.active::after { left: 0; right: 0; }
.wd { font: 700 11px "Open Sans", sans-serif; fill: #fff; text-anchor: middle; }
.tray { margin-left: auto; display: flex; align-items: center; height: 50px; }
.t1 { margin-right: 15px; }
.t2 { margin-right: 13px; }
.t3 { margin-right: 11px; }
.t4 { margin-right: 13px; }
.t5 { margin-right: 12px; }
.t6 { margin-right: 0; }
.clock { width: 84px; display: flex; flex-direction: column; align-items: center; font-size: 14.500px; line-height: 24px; }
.notif { position: relative; width: 36px; margin: 0 19px 0 14px; display: flex; height: 30px; }
.notif svg { margin-left: 5px; margin-top: 1px; }
.badge { position: absolute; left: 16px; top: 11px; width: 20px; height: 20px; border-radius: 50%; background: #444; border: 1px solid #777; font-size: 13px; line-height: 18px; text-align: center; }
```
